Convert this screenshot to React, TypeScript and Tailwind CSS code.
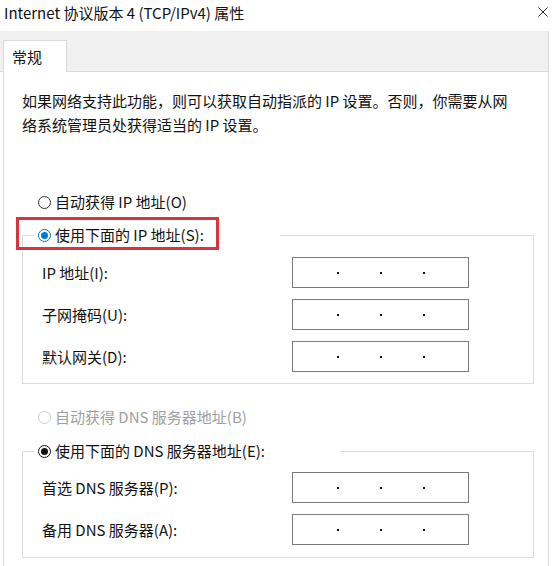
import type { ReactNode } from "react"

type RadioKind = "off" | "blue" | "black" | "disabled"

function Radio({ kind }: { kind: RadioKind }) {
  const ring =
    kind === "blue"
      ? "border-[#0078d7]"
      : kind === "black"
        ? "border-[#111111]"
        : kind === "disabled"
          ? "border-[#cccccc]"
          : "border-[#333333]"
  return (
    <span className={`flex h-[13px] w-[13px] shrink-0 items-center justify-center rounded-full border bg-white ${ring}`}>
      {kind === "blue" && <span className="h-[7px] w-[7px] rounded-full bg-[#0078d7]" />}
      {kind === "black" && <span className="h-[7px] w-[7px] rounded-full bg-[#111111]" />}
    </span>
  )
}

function RadioRow({ kind, children }: { kind: RadioKind; children: ReactNode }) {
  return (
    <div className="flex h-[24px] items-center gap-[4px]">
      <Radio kind={kind} />
      <span className={kind === "disabled" ? "text-[#a0a0a0]" : "text-[#111111]"}>{children}</span>
    </div>
  )
}

function IpInput() {
  return (
    <div className="flex h-[31px] w-[177px] items-center border border-[#7a7a7a] bg-white">
      <span className="w-[44px]" />
      <span className="h-[2px] w-[2px] bg-[#111]" />
      <span className="w-[41px]" />
      <span className="h-[2px] w-[2px] bg-[#111]" />
      <span className="w-[41px]" />
      <span className="h-[2px] w-[2px] bg-[#111]" />
    </div>
  )
}

function Field({ label }: { label: string }) {
  return (
    <div className="flex items-center">
      <span className="w-[269px] pl-[19px] text-[#111111]">{label}</span>
      <IpInput />
    </div>
  )
}

export default function App() {
  return (
    <div className="h-[566px] w-[559px] overflow-hidden bg-white font-['Noto_Sans_CJK_SC',sans-serif] text-[15px] leading-[24px] text-[#111111]">
      {/* title bar */}
      <div className="flex h-[31px] items-start justify-between pl-[4px] pr-[11px]">
        <span className="leading-[26px]">Internet 协议版本 4 (TCP/IPv4) 属性</span>
        <svg className="mt-[7px]" width="10" height="10" viewBox="0 0 10 10">
          <path d="M0.5 0.5 L9.5 9.5 M9.5 0.5 L0.5 9.5" stroke="#222" strokeWidth="1" />
        </svg>
      </div>

      <div className="mr-[10px]">
        {/* tab strip */}
        <div className="flex h-[41px] items-end border-b border-r border-[#d9d9d9] bg-[#f0f0f0]">
          <div className="-mb-px ml-[3px] flex h-[32px] w-[64px] items-center border border-b-0 border-[#d9d9d9] bg-white pl-[8px]">
            常规
          </div>
        </div>

        {/* panel */}
        <div className="ml-[3px] h-[500px] border-l border-r border-[#d9d9d9] pl-[18px] pt-[17px]">
          <p>
            如果网络支持此功能，则可以获取自动指派的 IP 设置。否则，你需要从网
            <br />
            络系统管理员处获得适当的 IP 设置。
          </p>

          <div className="ml-[16px] mt-[53px]">
            <RadioRow kind="off">自动获得 IP 地址(O)</RadioRow>
          </div>

          <fieldset className="mt-[9px] w-[512px] border border-[#dcdcdc] pb-[11px]">
            <legend className="ml-[11px] w-[246px]">
              <div className="relative pl-[4px]">
                <RadioRow kind="blue">使用下面的 IP 地址(S):</RadioRow>
                <div className="absolute -top-[6px] left-[-18px] h-[33px] w-[203px] border-[3px] border-[#d7353d]" />
              </div>
            </legend>
            <div className="flex flex-col gap-[11px] pt-[10px]">
              <Field label="IP 地址(I):" />
              <Field label="子网掩码(U):" />
              <Field label="默认网关(D):" />
            </div>
          </fieldset>

          <div className="ml-[16px] mt-[21px]">
            <RadioRow kind="disabled">自动获得 DNS 服务器地址(B)</RadioRow>
          </div>

          <fieldset className="mt-[10px] w-[512px] border border-[#dcdcdc] pb-[12px]">
            <legend className="ml-[11px] w-[306px] pl-[4px]">
              <RadioRow kind="black">使用下面的 DNS 服务器地址(E):</RadioRow>
            </legend>
            <div className="flex flex-col gap-[11px] pt-[9px]">
              <Field label="首选 DNS 服务器(P):" />
              <Field label="备用 DNS 服务器(A):" />
            </div>
          </fieldset>
        </div>
      </div>
    </div>
  )
}
